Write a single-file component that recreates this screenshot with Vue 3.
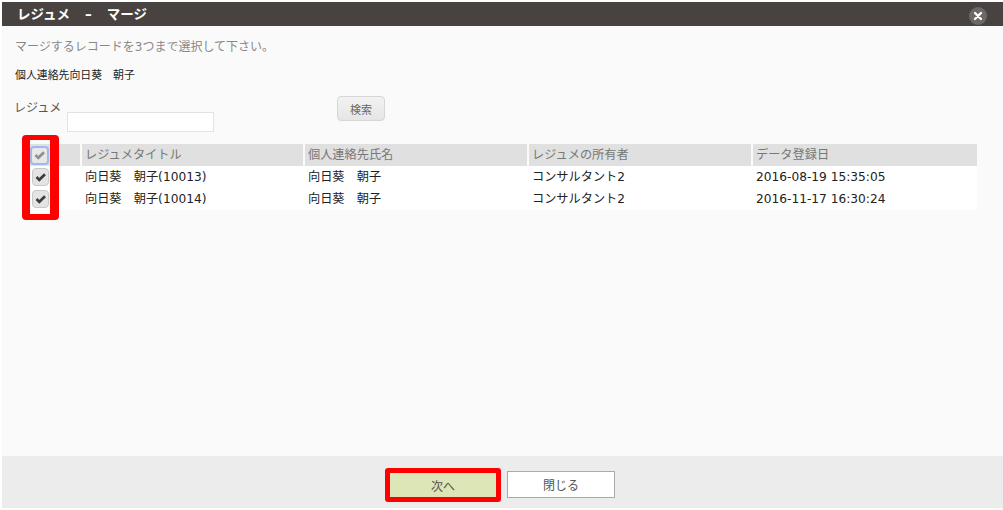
<script setup>
const columns = ['レジュメタイトル', '個人連絡先氏名', 'レジュメの所有者', 'データ登録日']
const rows = [
  ['向日葵　朝子(10013)', '向日葵　朝子', 'コンサルタント2', '2016-08-19 15:35:05'],
  ['向日葵　朝子(10014)', '向日葵　朝子', 'コンサルタント2', '2016-11-17 16:30:24']
]
</script>

<template>
  <div class="dialog">
    <header class="titlebar">
      <span class="title">
        <span>レジュメ</span>
        <span class="dash">–</span>
        <span>マージ</span>
      </span>
      <span class="close">
        <svg width="16" height="16" viewBox="0 0 16 16">
          <path d="M5 5l6 6M11 5l-6 6" stroke="#fff" stroke-width="2.4" stroke-linecap="round" />
        </svg>
      </span>
    </header>
    <main class="content">
      <p class="hint">マージするレコードを3つまで選択して下さい。</p>
      <p class="contact">個人連絡先向日葵　朝子</p>
      <div class="search">
        <label class="label">レジュメ</label>
        <input class="field" type="text" />
        <button class="search-btn">検索</button>
      </div>
      <div class="grid-wrap">
        <div class="marker"></div>
        <div class="grid">
          <div class="row head">
            <div class="check-col">
              <span class="check focused">
                <svg width="14" height="12" viewBox="0 0 14 12"><path d="M2.5 6l2.8 2.8L11 3.2" fill="none" stroke="#8f8f8f" stroke-width="2.6" /></svg>
              </span>
            </div>
            <div v-for="c in columns" :key="c" class="cell">{{ c }}</div>
          </div>
          <div v-for="r in rows" :key="r[0]" class="row">
            <div class="check-col">
              <span class="check">
                <svg width="14" height="12" viewBox="0 0 14 12"><path d="M2.5 6l2.8 2.8L11 3.2" fill="none" stroke="#3c3c3c" stroke-width="2.6" /></svg>
              </span>
            </div>
            <div v-for="v in r" :key="v" class="cell data">{{ v }}</div>
          </div>
        </div>
      </div>
    </main>
    <footer class="footer">
      <button class="btn next">次へ</button>
      <button class="btn closer">閉じる</button>
    </footer>
  </div>
</template>

<style>
html, body { margin: 0; background: #fff; }
</style>

<style scoped>
.dialog {
  width: 1001px;
  height: 508px;
  margin-left: 2px;
  padding-top: 2px;
  box-sizing: border-box;
  display: flex;
  flex-direction: column;
  font-family: "DejaVu Sans", "Noto Sans CJK JP", sans-serif;
  font-size: 12px;
  color: #222;
}
.titlebar {
  height: 24px;
  flex: none;
  background: #484341;
  display: flex;
  align-items: center;
  justify-content: space-between;
  padding: 0 16px 0 15px;
}
.title { color: #fff; font-weight: 700; font-size: 13.5px; line-height: 20px; display: flex; }
.dash { margin: 0 15px; }
.close {
  width: 18px;
  height: 18px;
  margin-top: 3px;
  border-radius: 50%;
  background: #6b6866;
  display: flex;
  align-items: center;
  justify-content: center;
}
.content {
  flex: 1;
  background: #fafafa;
  padding: 12px 0 0 13px;
  min-height: 0;
}
.hint { margin: 0; color: #888; font-size: 12px; line-height: 18px; }
.contact { margin: 12px 0 0; font-size: 10.9px; line-height: 16px; color: #222; }
.search { display: flex; align-items: flex-start; margin-top: 12px; height: 50px; }
.label { color: #555; font-size: 12px; line-height: 18px; margin: 3px 0 0 -1px; width: 53px; }
.field {
  width: 147px;
  height: 20px;
  box-sizing: border-box;
  margin-top: 16px;
  border: 1px solid #e2e2e2;
  background: #fff;
  padding: 0;
}
.search-btn {
  width: 48px;
  height: 25px;
  margin-left: 123px;
  border: 1px solid #d6d6d6;
  border-radius: 4px;
  background: linear-gradient(#f2f2f2, #e6e6e6);
  color: #666;
  font: inherit;
  font-size: 11px;
  padding: 0;
}
.grid-wrap { position: relative; margin-top: -2px; }
.marker {
  position: absolute;
  left: 7px;
  top: -9px;
  width: 37px;
  height: 85px;
  box-sizing: border-box;
  border-style: solid;
  border-color: #f00;
  border-width: 5px 9px 6px 8px;
  border-radius: 4px;
  z-index: 2;
  pointer-events: none;
}
.grid { margin-left: 15px; width: 947px; }
.row { display: grid; grid-template-columns: 50px 221px 222px 222px 224px; column-gap: 2px; height: 22px; background: #fff; }
.row.head { background: transparent; }
.check-col { display: flex; align-items: center; }
.head .check-col { background: #e0e0e0; }
.check {
  width: 17px;
  height: 18px;
  box-sizing: border-box;
  flex: none;
  border: 1px solid #c8c8c8;
  border-radius: 4px;
  background: #e4e4e4;
  display: flex;
  align-items: center;
  justify-content: center;
  margin-left: 2px;
  position: relative;
  z-index: 3;
}
.check.focused {
  width: 19px;
  height: 19px;
  margin-left: 0;
  border: 2px solid #9db9ee;
  background: #e8e8e8;
}
.cell { padding-left: 3px; font-size: 12.2px; line-height: 22px; white-space: nowrap; background: #e0e0e0; color: #777; }
.cell.data { background: #fff; color: #222; }
.footer {
  height: 52px;
  flex: none;
  box-sizing: border-box;
  background: #ececec;
  display: flex;
  justify-content: center;
  align-items: center;
  gap: 6px;
  padding: 6px 5px 0 0;
}
.btn {
  box-sizing: border-box;
  font: inherit;
  font-size: 12px;
  padding: 0;
  color: #555;
}
.next {
  width: 116px;
  height: 34px;
  border: 5px solid #f00;
  border-radius: 3px;
  background: #dce6b6;
}
.closer {
  width: 108px;
  height: 27px;
  margin-bottom: 2px;
  border: 1px solid #aaa;
  background: #fff;
}
</style>
